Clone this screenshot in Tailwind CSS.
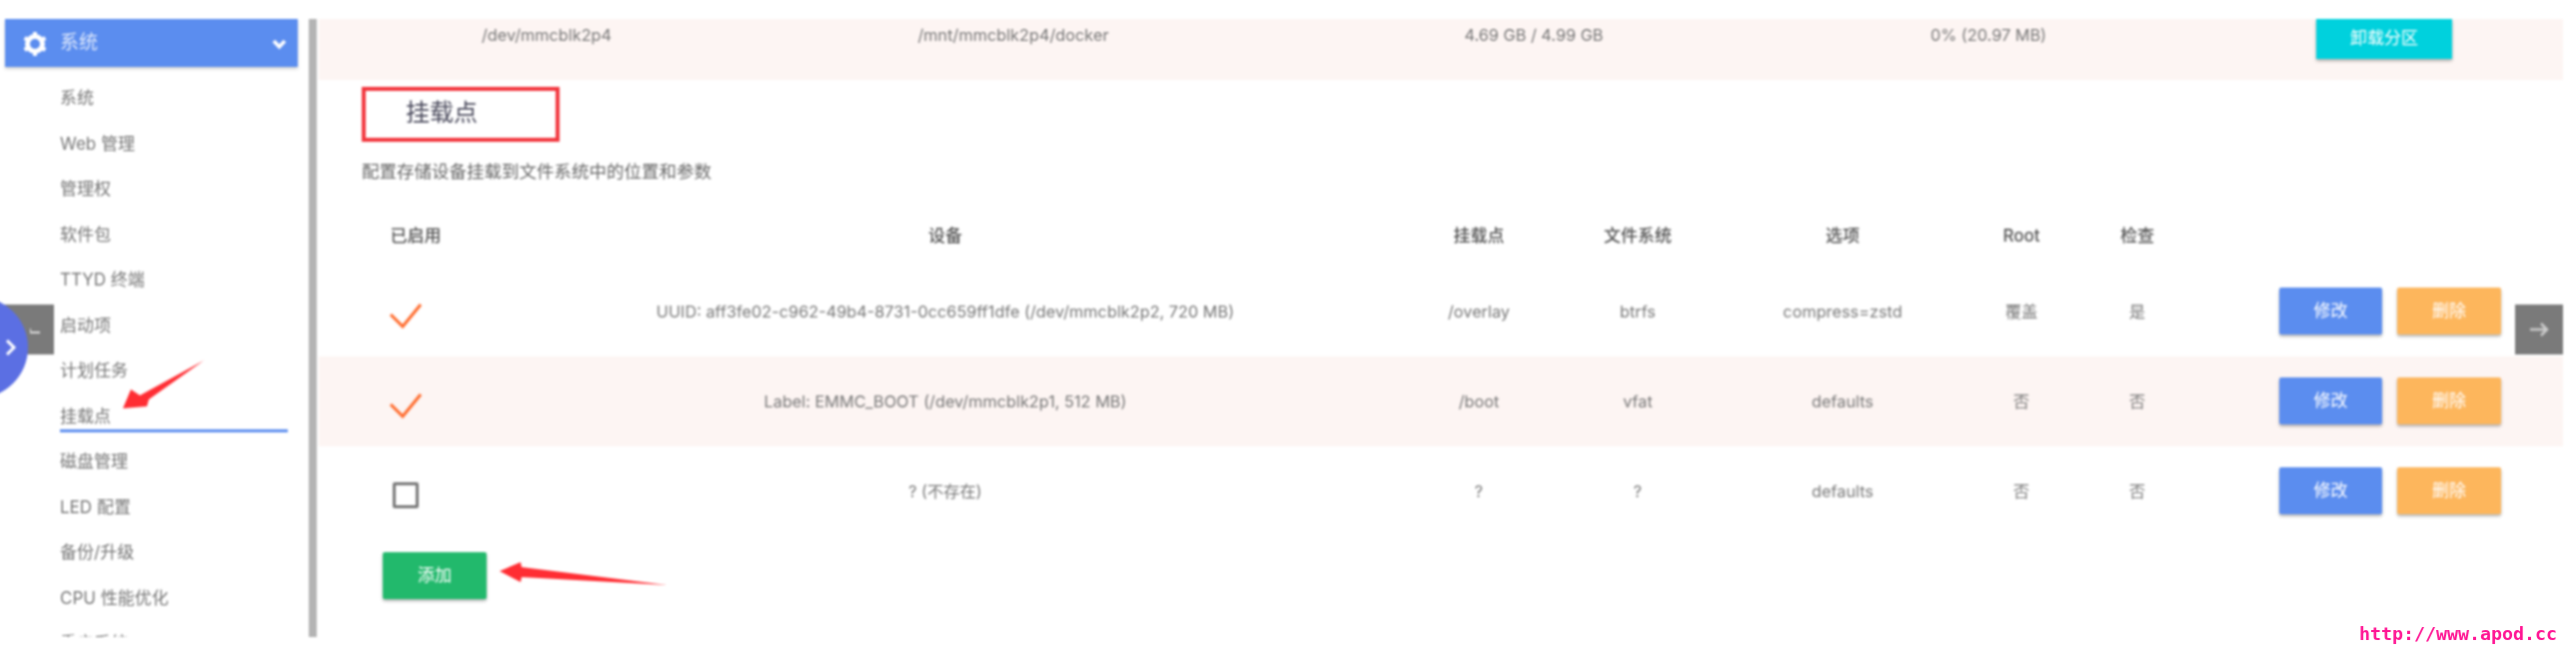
<!DOCTYPE html>
<html lang="zh">
<head>
  <meta charset="UTF-8" />
  <title>挂载点</title>
  <script src="https://cdn.jsdelivr.net/npm/@tailwindcss/browser@4"></script>
</head>
<body class="bg-white overflow-hidden font-['Inter','Noto_Sans_CJK_SC',sans-serif] text-[#777] text-[16.3px]">
<div class="relative w-[2578px] h-[661px] overflow-hidden">
  <div class="blur-[0.8px]">
    <div class="h-[19px]"></div>
    <div class="flex h-[619px] overflow-hidden">

      <!-- sidebar -->
      <aside class="w-[309px] shrink-0 text-[17px]">
        <div class="ml-[5px] w-[293px] h-[48px] bg-[#5b8def] shadow-[0_2px_3px_rgba(0,0,0,0.2)] flex items-center pl-[17px] pr-[11px] text-white">
          <svg class="w-[26px] h-[26px] mt-[2px]" viewBox="0 0 26 26"><circle cx="13" cy="13" r="7.5" fill="none" stroke="#fff" stroke-width="5"/><g stroke="#fff" stroke-width="4"><path d="M13 1v4M13 21v4M2.6 7l3.5 2M19.9 17l3.5 2M2.6 19l3.5-2M19.9 9l3.5-2"/></g></svg>
          <span class="ml-[12px] mt-[1px] flex-1 text-[19px] text-[#dbe6fb]">系统</span>
          <svg class="w-[15px] h-[12px] mt-[2px]" viewBox="0 0 15 12"><path d="M2 3l5.5 6L13 3" fill="none" stroke="#fff" stroke-width="3.5"/></svg>
        </div>
        <ul class="mt-[9px] ml-[60px] w-[228px]">
          <li class="h-[45.5px] flex items-center">系统</li>
          <li class="h-[45.5px] flex items-center">Web 管理</li>
          <li class="h-[45.5px] flex items-center">管理权</li>
          <li class="h-[45.5px] flex items-center">软件包</li>
          <li class="h-[45.5px] flex items-center">TTYD 终端</li>
          <li class="h-[45.5px] flex items-center">启动项</li>
          <li class="h-[45.5px] flex items-center">计划任务</li>
          <li class="relative h-[45.5px] flex items-center after:absolute after:left-0 after:right-0 after:bottom-[7px] after:h-[3px] after:bg-[#5b8def]">挂载点</li>
          <li class="h-[45.5px] flex items-center">磁盘管理</li>
          <li class="h-[45.5px] flex items-center">LED 配置</li>
          <li class="h-[45.5px] flex items-center">备份/升级</li>
          <li class="h-[45.5px] flex items-center">CPU 性能优化</li>
          <li class="h-[45.5px] flex items-center">重启系统</li>
        </ul>
      </aside>

      <div class="w-[8px] shrink-0 bg-[#b4b4b4]"></div>

      <!-- content -->
      <main class="w-[2248px] shrink-0 pl-[2px]">
        <div class="grid grid-cols-[456px_478px_564px_346px_1fr] h-[61px] bg-[#fdf5f3] text-center">
          <div class="pt-[4px]">/dev/mmcblk2p4</div>
          <div class="pt-[4px]">/mnt/mmcblk2p4/docker</div>
          <div class="pt-[4px]">4.69 GB / 4.99 GB</div>
          <div class="pt-[4px]">0% (20.97 MB)</div>
          <div class="pl-[155px] text-left">
            <button class="w-[136px] h-[40px] bg-[#00d1dd] text-white text-[17px] shadow-[0_2px_3px_rgba(0,0,0,0.3)]">卸载分区</button>
          </div>
        </div>

        <h2 class="h-[66px] pl-[87px] flex items-center text-[24px] text-[#4a4a5c]">挂载点</h2>
        <p class="h-[52px] pl-[43px] flex items-center text-[17.5px] text-[#666]">配置存储设备挂载到文件系统中的位置和参数</p>

        <table class="mt-[5px] w-full table-fixed text-center">
          <colgroup>
            <col class="w-[194px]" /><col class="w-[866px]" /><col class="w-[202px]" /><col class="w-[116px]" />
            <col class="w-[294px]" /><col class="w-[64px]" /><col class="w-[168px]" /><col />
          </colgroup>
          <thead>
            <tr class="h-[64px] text-[17px] text-[#555]">
              <th class="font-medium pt-[3px]">已启用</th><th class="font-medium pt-[3px]">设备</th><th class="font-medium pt-[3px]">挂载点</th><th class="font-medium pt-[3px]">文件系统</th>
              <th class="font-medium pt-[3px]">选项</th><th class="font-medium pt-[3px]">Root</th><th class="font-medium pt-[3px]">检查</th><th></th>
            </tr>
          </thead>
          <tbody>
            <tr class="h-[90px]">
              <td><svg class="block ml-[70px] mt-[8px] w-[34px] h-[26px]" viewBox="0 0 34 26"><path d="M2 12l12 12L32 2" fill="none" stroke="#ff6a2b" stroke-width="3"/></svg></td>
              <td>UUID: aff3fe02-c962-49b4-8731-0cc659ff1dfe (/dev/mmcblk2p2, 720 MB)</td>
              <td>/overlay</td><td>btrfs</td><td>compress=zstd</td><td>覆盖</td><td>是</td>
              <td><div class="flex justify-end gap-[15px] pr-[62px] pb-[1px] text-white text-[17px]">
                <button class="w-[103px] h-[47px] bg-[#5b8def] rounded-[2px] shadow-[0_2px_3px_rgba(0,0,0,0.3)]">修改</button>
                <button class="w-[104px] h-[47px] bg-[#fdb65c] rounded-[2px] shadow-[0_2px_3px_rgba(0,0,0,0.3)]">删除</button>
              </div></td>
            </tr>
            <tr class="h-[90px] bg-[#fdf5f3]">
              <td><svg class="block ml-[70px] mt-[8px] w-[34px] h-[26px]" viewBox="0 0 34 26"><path d="M2 12l12 12L32 2" fill="none" stroke="#ff6a2b" stroke-width="3"/></svg></td>
              <td>Label: EMMC_BOOT (/dev/mmcblk2p1, 512 MB)</td>
              <td>/boot</td><td>vfat</td><td>defaults</td><td>否</td><td>否</td>
              <td><div class="flex justify-end gap-[15px] pr-[62px] pb-[1px] text-white text-[17px]">
                <button class="w-[103px] h-[47px] bg-[#5b8def] rounded-[2px] shadow-[0_2px_3px_rgba(0,0,0,0.3)]">修改</button>
                <button class="w-[104px] h-[47px] bg-[#fdb65c] rounded-[2px] shadow-[0_2px_3px_rgba(0,0,0,0.3)]">删除</button>
              </div></td>
            </tr>
            <tr class="h-[90px]">
              <td><div class="ml-[74px] mt-[8px] w-[26px] h-[26px] border-[3px] border-[#777] rounded-[2px]"></div></td>
              <td>? (不存在)</td>
              <td>?</td><td>?</td><td>defaults</td><td>否</td><td>否</td>
              <td><div class="flex justify-end gap-[15px] pr-[62px] pb-[1px] text-white text-[17px]">
                <button class="w-[103px] h-[47px] bg-[#5b8def] rounded-[2px] shadow-[0_2px_3px_rgba(0,0,0,0.3)]">修改</button>
                <button class="w-[104px] h-[47px] bg-[#fdb65c] rounded-[2px] shadow-[0_2px_3px_rgba(0,0,0,0.3)]">删除</button>
              </div></td>
            </tr>
          </tbody>
        </table>
        <button class="mt-[16px] ml-[64px] w-[104px] h-[47px] bg-[#22b96c] text-white text-[17px] rounded-[2px] shadow-[0_2px_3px_rgba(0,0,0,0.3)]">添加</button>
      </main>
    </div>

    <!-- overlays: page nav + screenshot annotations -->
    <div class="absolute left-0 top-[305px] w-[54px] h-[50px] bg-[#7a7a7a]"></div>
    <svg class="absolute left-[30px] top-[324px] w-[10px] h-[12px]" viewBox="0 0 10 12"><path d="M0 9h10M0 5v4" stroke="#ddd" stroke-width="2" fill="none"/></svg>
    <div class="absolute left-[-74px] top-[297px] w-[102px] h-[102px] rounded-full bg-[#5b6fe3]"></div>
    <svg class="absolute left-[5px] top-[339px] w-[12px] h-[18px]" viewBox="0 0 12 18"><path d="M2 2l7 7-7 7" fill="none" stroke="#fff" stroke-width="3"/></svg>
    <div class="absolute left-[2517px] top-[305px] w-[48px] h-[50px] bg-[#7a7a7a] flex items-center justify-center">
      <svg class="w-[20px] h-[16px]" viewBox="0 0 20 16"><path d="M1 8h17M12 2l6 6-6 6" fill="none" stroke="#ccc" stroke-width="2.5"/></svg>
    </div>
    <div class="absolute left-[362px] top-[87px] w-[198px] h-[55px] border-[4px] border-[#f2353d]"></div>
    <svg class="absolute left-0 top-0 w-[2578px] h-[661px] pointer-events-none" viewBox="0 0 2578 661">
      <polygon points="123,409 131,390 140,396 204,361 149,400 147,407" fill="#ff2d33"/>
      <polygon points="500,572 521,563 522,568 668,586 522,578 521,583" fill="#ff2d33"/>
    </svg>
  </div>
  <div class="absolute left-[2361px] top-[622px] font-['DejaVu_Sans_Mono',monospace] font-bold text-[18.3px] leading-[26px] text-[#ff1493]">http://www.apod.cc</div>
</div>
</body>
</html>
